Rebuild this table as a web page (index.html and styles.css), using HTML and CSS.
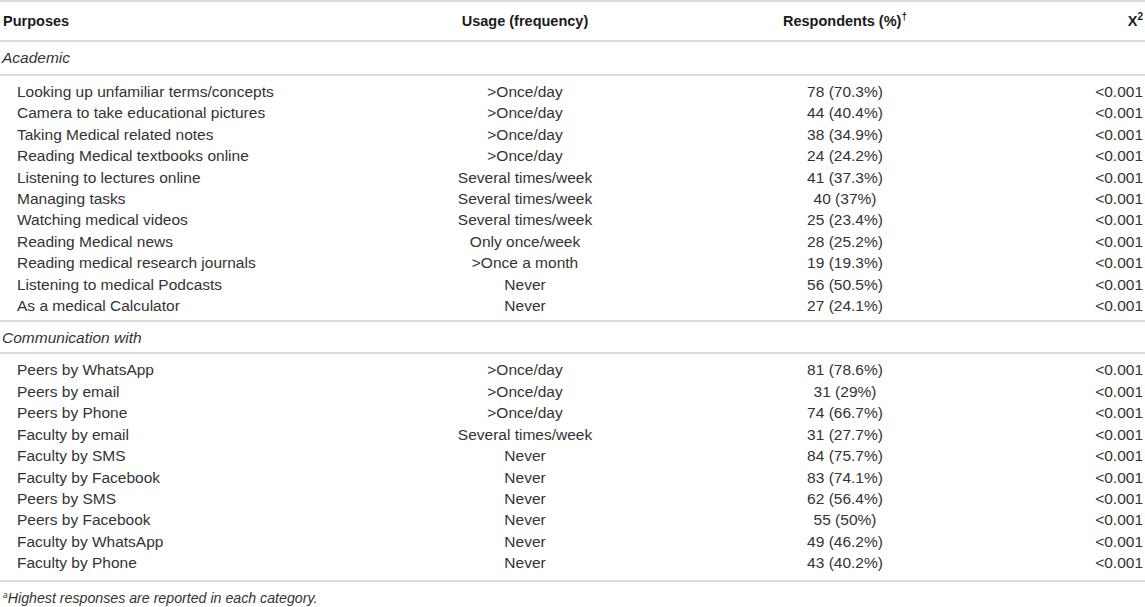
FILE: index.html
```html
<!DOCTYPE html>
<html>
<head>
<meta charset="utf-8">
<link rel="stylesheet" href="styles.css">
</head>
<body>
<table class="data">
  <colgroup>
    <col class="c1"><col class="c2"><col class="c3"><col class="c4">
  </colgroup>
  <thead>
    <tr class="head">
      <th class="left">Purposes</th>
      <th>Usage (frequency)</th>
      <th>Respondents (%)<sup>†</sup></th>
      <th class="right">X<sup>2</sup></th>
    </tr>
  </thead>
  <tbody>
    <tr class="cat"><td colspan="4">Academic</td></tr>
    <tr class="first"><td class="item">Looking up unfamiliar terms/concepts</td><td>&gt;Once/day</td><td>78 (70.3%)</td><td class="right">&lt;0.001</td></tr>
    <tr><td class="item">Camera to take educational pictures</td><td>&gt;Once/day</td><td>44 (40.4%)</td><td class="right">&lt;0.001</td></tr>
    <tr><td class="item">Taking Medical related notes</td><td>&gt;Once/day</td><td>38 (34.9%)</td><td class="right">&lt;0.001</td></tr>
    <tr><td class="item">Reading Medical textbooks online</td><td>&gt;Once/day</td><td>24 (24.2%)</td><td class="right">&lt;0.001</td></tr>
    <tr><td class="item">Listening to lectures online</td><td>Several times/week</td><td>41 (37.3%)</td><td class="right">&lt;0.001</td></tr>
    <tr><td class="item">Managing tasks</td><td>Several times/week</td><td>40 (37%)</td><td class="right">&lt;0.001</td></tr>
    <tr><td class="item">Watching medical videos</td><td>Several times/week</td><td>25 (23.4%)</td><td class="right">&lt;0.001</td></tr>
    <tr><td class="item">Reading Medical news</td><td>Only once/week</td><td>28 (25.2%)</td><td class="right">&lt;0.001</td></tr>
    <tr><td class="item">Reading medical research journals</td><td>&gt;Once a month</td><td>19 (19.3%)</td><td class="right">&lt;0.001</td></tr>
    <tr><td class="item">Listening to medical Podcasts</td><td>Never</td><td>56 (50.5%)</td><td class="right">&lt;0.001</td></tr>
    <tr class="last"><td class="item">As a medical Calculator</td><td>Never</td><td>27 (24.1%)</td><td class="right">&lt;0.001</td></tr>
    <tr class="cat cat-b"><td colspan="4">Communication with</td></tr>
    <tr class="first"><td class="item">Peers by WhatsApp</td><td>&gt;Once/day</td><td>81 (78.6%)</td><td class="right">&lt;0.001</td></tr>
    <tr><td class="item">Peers by email</td><td>&gt;Once/day</td><td>31 (29%)</td><td class="right">&lt;0.001</td></tr>
    <tr><td class="item">Peers by Phone</td><td>&gt;Once/day</td><td>74 (66.7%)</td><td class="right">&lt;0.001</td></tr>
    <tr><td class="item">Faculty by email</td><td>Several times/week</td><td>31 (27.7%)</td><td class="right">&lt;0.001</td></tr>
    <tr><td class="item">Faculty by SMS</td><td>Never</td><td>84 (75.7%)</td><td class="right">&lt;0.001</td></tr>
    <tr><td class="item">Faculty by Facebook</td><td>Never</td><td>83 (74.1%)</td><td class="right">&lt;0.001</td></tr>
    <tr><td class="item">Peers by SMS</td><td>Never</td><td>62 (56.4%)</td><td class="right">&lt;0.001</td></tr>
    <tr><td class="item">Peers by Facebook</td><td>Never</td><td>55 (50%)</td><td class="right">&lt;0.001</td></tr>
    <tr><td class="item">Faculty by WhatsApp</td><td>Never</td><td>49 (46.2%)</td><td class="right">&lt;0.001</td></tr>
    <tr class="last last-b"><td class="item">Faculty by Phone</td><td>Never</td><td>43 (40.2%)</td><td class="right">&lt;0.001</td></tr>
  </tbody>
</table>
<p class="note"><sup>a</sup>Highest responses are reported in each category.</p>
</body>
</html>
```

FILE: styles.css
```css
html, body {
  margin: 0;
  padding: 0;
  background: #ffffff;
}
body {
  font-family: "Liberation Sans", Arial, sans-serif;
  color: #333333;
  font-size: 15.5px;
}
.data {
  width: 1145px;
  border-collapse: collapse;
  table-layout: fixed;
  border-top: 2px solid #dcdcdc;
}
.c1 { width: 400px; }
.c2 { width: 250px; }
.c3 { width: 390px; }
.c4 { width: 105px; }
th, td {
  padding: 0;
  text-align: center;
  font-weight: normal;
  line-height: 21.4px;
  white-space: nowrap;
}
.head th {
  font-weight: bold;
  color: #1a1a1a;
  height: 37px;
  padding-top: 1px;
  font-size: 14.5px;
  border-bottom: 2px solid #dcdcdc;
}
.head sup {
  font-size: 10px;
  line-height: 0;
  vertical-align: 6px;
}
th.left, td.left { text-align: left; padding-left: 3px; }
.right { text-align: right; padding-right: 2px; }
th.right { padding-right: 2px; }
.cat td {
  text-align: left;
  font-style: italic;
  padding-left: 2px;
  height: 32px;
  border-bottom: 2px solid #dcdcdc;
}
.cat-b td { height: 30px; }
.item { text-align: left; padding-left: 17px; }
.first td { padding-top: 5px; }
.last td { padding-bottom: 4px; border-bottom: 2px solid #dcdcdc; }
.last-b td { padding-bottom: 6px; }
.note {
  margin: 7px 0 0 0;
  padding-left: 3px;
  font-size: 14.2px;
  font-style: italic;
  line-height: 18px;
}
.note sup {
  font-size: 8.5px;
  line-height: 0;
  vertical-align: 5px;
}
```
